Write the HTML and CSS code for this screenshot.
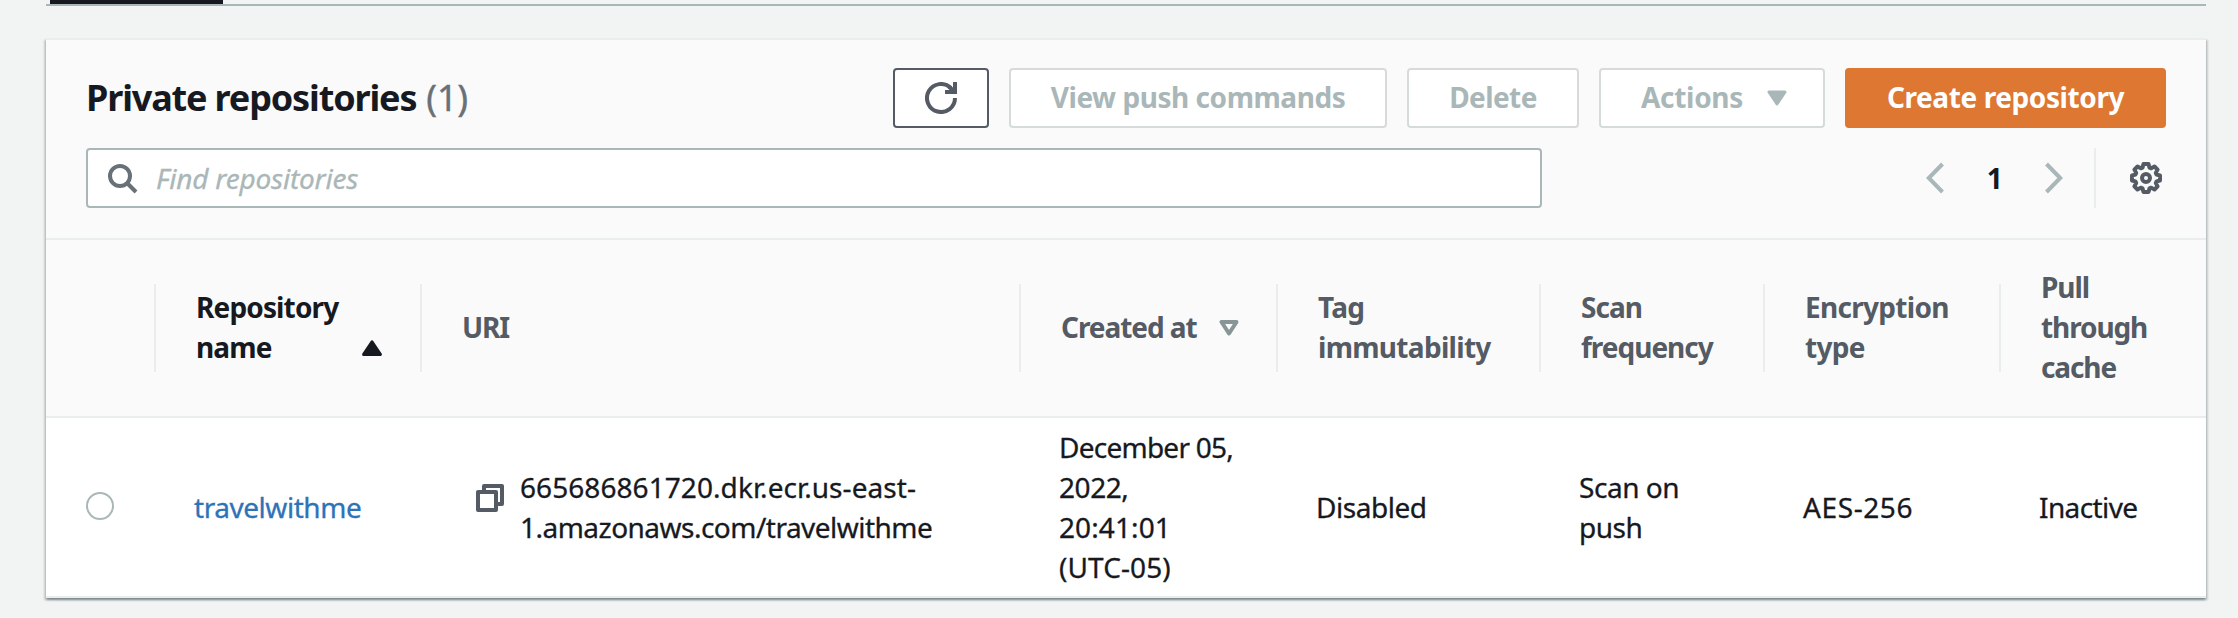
FILE: index.html
```html
<!DOCTYPE html>
<html lang="en">
<head>
<meta charset="utf-8">
<title>Private repositories</title>
<link rel="stylesheet" href="styles.css">
</head>
<body>
<div class="tabs"><div class="tab-active"></div></div>
<section class="panel">
  <header class="panel-head">
    <div class="title-row">
      <h1 class="title">Private repositories<span class="count">(1)</span></h1>
      <div class="buttons">
        <button class="btn refresh" aria-label="Refresh">
          <svg width="32" height="32" viewBox="0 0 32 32"><path d="M30 16a14 14 0 1 1-4.2-10" fill="none" stroke="currentColor" stroke-width="4"/><path d="M28 0h4v12H20V8h4.500L22.500 6l3-2.500 2.500 2z" fill="currentColor"/></svg>
        </button>
        <button class="btn disabled push">View push commands</button>
        <button class="btn disabled delete">Delete</button>
        <button class="btn disabled actions"><span>Actions</span>
          <svg width="20" height="16" viewBox="0 0 20 16"><path d="M2 2h16l-8 12z" fill="currentColor" stroke="currentColor" stroke-width="3" stroke-linejoin="round"/></svg>
        </button>
        <button class="btn primary">Create repository</button>
      </div>
    </div>
    <div class="tools-row">
      <div class="search">
        <svg width="30" height="30" viewBox="0 0 30 30" fill="none" stroke="currentColor" stroke-width="4"><circle cx="12" cy="12" r="10"/><path d="M19 19l9 9"/></svg>
        <span class="placeholder">Find repositories</span>
      </div>
      <div class="pager">
        <svg class="prev" width="18" height="32" viewBox="0 0 18 32" fill="none" stroke="currentColor" stroke-width="4"><path d="M16.500 2L2.800 16l13.700 14"/></svg>
        <span class="page">1</span>
        <svg class="next" width="18" height="32" viewBox="0 0 18 32" fill="none" stroke="currentColor" stroke-width="4"><path d="M1.500 2l13.700 14L1.500 30"/></svg>
        <div class="gear">
          <svg width="32" height="32" viewBox="0 0 32 32" fill="none" stroke="currentColor" stroke-width="4" stroke-linejoin="round"><path d="M13.500 2h5l1 3.600 1.700.7 3.300-1.800 3.100 3.100-1.800 3.300.7 1.700 3.500.9v5l-3.500.9-.7 1.700 1.800 3.300-3.100 3.100-3.300-1.800-1.700.7-1 3.600h-5l-1-3.600-1.700-.7-3.300 1.800-3.100-3.100 1.800-3.300-.7-1.700L2 18.500v-5l3.500-.9.700-1.700-1.800-3.300 3.100-3.100 3.300 1.800 1.700-.7z"/><circle cx="16" cy="16" r="4"/></svg>
        </div>
      </div>
    </div>
  </header>
  <div class="grid head">
    <div class="cell"></div>
    <div class="cell sorted"><span>Repository<br>name</span>
      <svg class="sort-up" width="20" height="16" viewBox="0 0 20 16"><path d="M10 1.800L18.400 14.400H1.600z" fill="currentColor" stroke="currentColor" stroke-width="3" stroke-linejoin="round"/></svg>
    </div>
    <div class="cell t-uri">URI</div>
    <div class="cell created"><span>Created at</span>
      <svg class="sort-down" width="20" height="16" viewBox="0 0 20 16"><path d="M2.500 2h15L10 13.500z" fill="none" stroke="currentColor" stroke-width="4" stroke-linejoin="round"/></svg>
    </div>
    <div class="cell">Tag<br>immutability</div>
    <div class="cell t-scan">Scan<br>frequency</div>
    <div class="cell t-enc">Encryption<br>type</div>
    <div class="cell t-pull">Pull<br>through<br>cache</div>
  </div>
  <div class="grid row">
    <div class="cell pick"><span class="radio"></span></div>
    <div class="cell"><a class="link">travelwithme</a></div>
    <div class="cell uri">
      <svg width="28" height="28" viewBox="0 0 28 28" fill="none" stroke="currentColor" stroke-width="4" stroke-linejoin="round"><path d="M8 6V2h18v18h-4"/><path d="M2 8h18v18H2z"/></svg>
      <span><span class="t-host">665686861720.dkr.ecr.us-east-</span><br>1.amazonaws.com/travelwithme</span>
    </div>
    <div class="cell"><span class="t-date">December 05,</span><br>2022,<br><span class="t-time">20:41:01<br>(UTC-05)</span></div>
    <div class="cell">Disabled</div>
    <div class="cell">Scan on<br>push</div>
    <div class="cell t-aes">AES-256</div>
    <div class="cell t-inactive">Inactive</div>
  </div>
</section>
</body>
</html>
```
FILE: styles.css
```css
* { box-sizing: border-box; }
body {
  margin: 0;
  padding: 0 32px 0 46px;
  height: 618px;
  overflow: hidden;
  background: #f2f3f3;
  color: #16191f;
  font: 28px/40px "Noto Sans", "Open Sans", sans-serif;
  letter-spacing: -0.45px;
}
svg { display: block; flex: none; }
.tabs { height: 6px; border-bottom: 2px solid #aab7b8; padding-left: 4px; }
.tab-active { width: 173px; height: 4px; background: #16191f; }
.panel {
  margin-top: 32px;
  height: 560px;
  background: #fff;
  border-top: 2px solid #eaeded;
  border-bottom: 2px solid #eaeded;
  box-shadow: 0 2px 2px 0 rgba(0,28,36,.3), 2px 2px 2px 0 rgba(0,28,36,.15), -2px 2px 2px 0 rgba(0,28,36,.15);
}
.panel-head {
  height: 200px;
  padding: 28px 40px 0;
  background: #fafafa;
  border-bottom: 2px solid #eaeded;
}
.title-row, .tools-row { display: flex; justify-content: space-between; }
.title-row { height: 80px; }
.title { margin: 0; font-size: 36px; line-height: 60px; letter-spacing: -1.15px; white-space: nowrap; }
.count { margin-left: 10px; font-weight: 400; color: #687078; letter-spacing: -.2px; -webkit-text-stroke: .4px; }
.buttons { display: flex; gap: 20px; }
.btn {
  display: flex; align-items: center; justify-content: center;
  height: 60px; padding: 0 0 2px;
  border: 2px solid #545b64; border-radius: 4px;
  background: #fff; color: #545b64;
  font: 700 28px/40px "Noto Sans", "Open Sans", sans-serif;
  letter-spacing: -.45px; white-space: nowrap;
}
.refresh { width: 96px; padding: 0; }
.disabled { border-color: #d5dbdb; color: #aab7b8; }
.push { width: 378px; }
.delete { width: 172px; letter-spacing: -.6px; }
.actions { width: 226px; gap: 24px; padding-left: 4px; letter-spacing: -.3px; }
.actions svg { margin-top: 2px; }
.primary { width: 321px; border-color: #dd7732; background: #dd7732; color: #fff; letter-spacing: -.4px; }
.search {
  display: flex; align-items: center; gap: 18px;
  width: 1456px; height: 60px; padding-left: 20px;
  border: 2px solid #aab7b8; border-radius: 4px;
  background: #fff; color: #687078;
}
.search svg { margin-top: 1px; }
.placeholder { color: #aab7b8; font-style: italic; letter-spacing: -.2px; -webkit-text-stroke: .3px; }
.pager { display: flex; align-items: center; height: 60px; color: #aab7b8; }
.page { width: 101px; text-align: center; font-weight: 700; color: #16191f; }
.gear {
  display: flex; align-items: center; justify-content: flex-end;
  width: 68px; height: 60px; margin: 0 4px 0 31px;
  border-left: 2px solid #eaeded; color: #545b64;
}
.grid { display: grid; grid-template-columns: 110px 266px 599px 257px 263px 224px 236px 205px; align-items: center; }
.cell { padding-left: 38px; white-space: nowrap; }
.head { height: 178px; background: #fafafa; border-bottom: 2px solid #eaeded; color: #545b64; font-weight: 700; letter-spacing: -.7px; }
.head .cell { display: flex; align-items: center; height: 88px; padding-bottom: 2px; border-right: 2px solid #eaeded; padding-left: 40px; }
.head .cell:last-child { border-right: 0; }
.head .sorted { color: #16191f; justify-content: space-between; padding-right: 38px; letter-spacing: -.85px; }
.sort-up { margin-top: 42px; }
.head .t-uri { letter-spacing: -1.2px; }
.head .created { gap: 22px; letter-spacing: -1.05px; }
.sort-down { color: #879596; margin-top: 2px; }
.head .t-scan { letter-spacing: -1px; }
.head .t-enc { letter-spacing: -.7px; }
.head .t-pull { letter-spacing: -1.1px; }
.row { height: 178px; -webkit-text-stroke: .3px; }
.pick { padding-left: 40px; }
.radio { display: block; width: 28px; height: 28px; margin-bottom: 2px; border: 2px solid #aab7b8; border-radius: 50%; background: #fff; }
.link { color: #2e73b8; }
.uri { display: flex; align-items: center; gap: 16px; padding-left: 54px; letter-spacing: -.52px; }
.uri svg { color: #545b64; margin-bottom: 18px; }
.t-host { letter-spacing: .07px; }
.t-date { letter-spacing: -.75px; }
.t-time { letter-spacing: .1px; }
.t-aes { letter-spacing: .6px; }
.t-inactive { letter-spacing: -.6px; }
```
